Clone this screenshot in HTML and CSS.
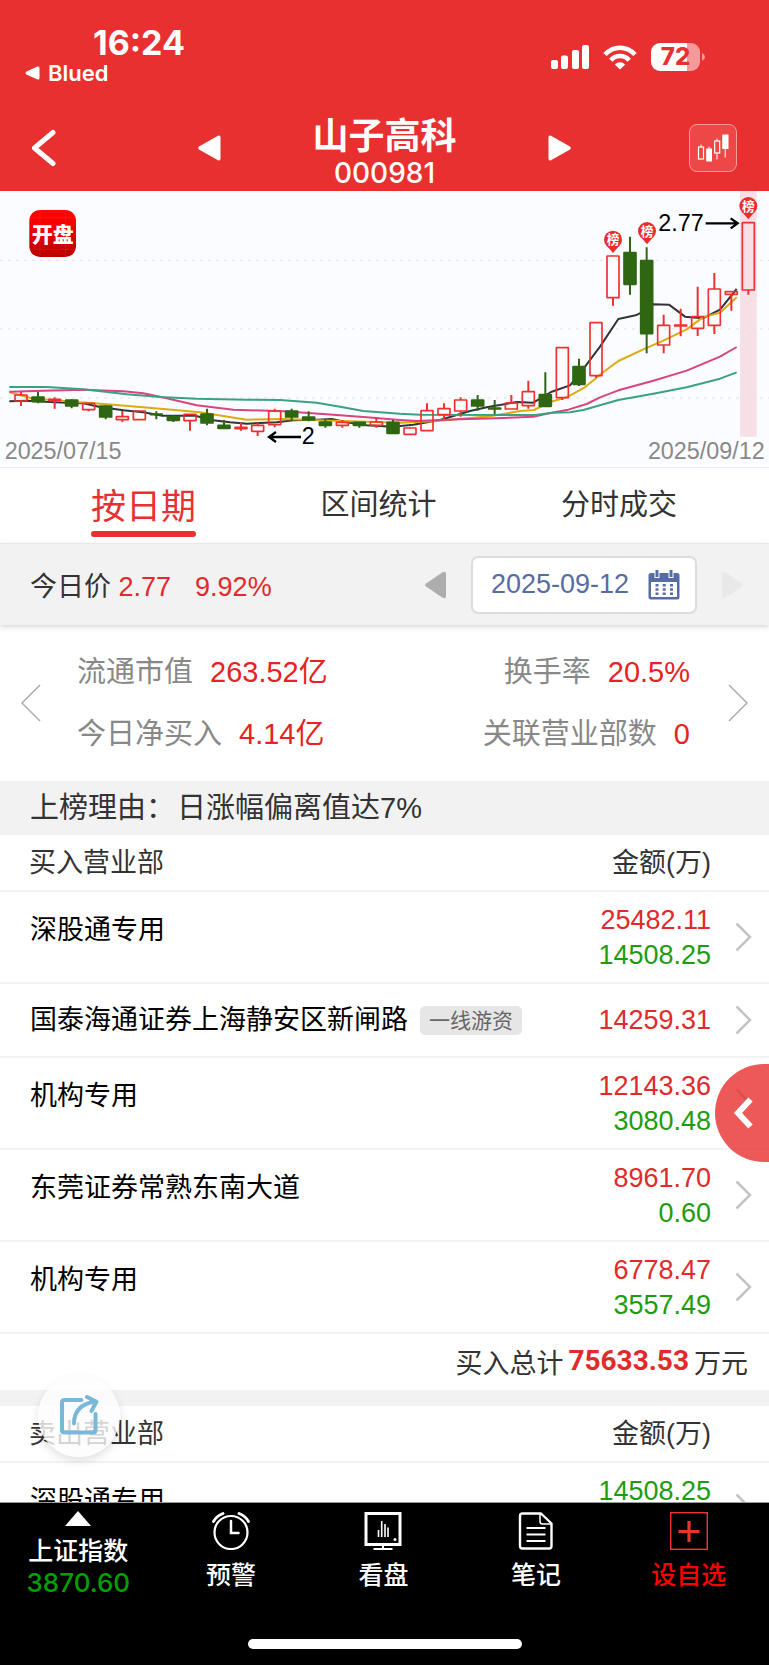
FILE: index.html
```html
<!DOCTYPE html>
<html lang="zh-CN">
<head>
<meta charset="utf-8">
<meta name="viewport" content="width=device-width, initial-scale=1">
<title>山子高科 000981</title>
<link rel="stylesheet" href="styles.css">
</head>
<body>
<header class="top">
  <div class="status">
    <div class="status-left">
      <div class="clock">16:24</div>
      <a class="return" href="#"><svg width="15" height="14" viewBox="0 0 15 14"><path d="M1.500 5.600 12.500.6Q14.500 0 14.500 2V12Q14.500 14 12.500 13.400L1.500 8.400Q-.5 7 1.500 5.600Z" fill="#fff"/></svg>Blued</a>
    </div>
    <div class="status-right">
      <svg width="38" height="25" viewBox="0 0 38 25" fill="#fff"><rect x="0" y="15" width="7" height="9" rx="2"/><rect x="10" y="10.500" width="7" height="13.500" rx="2"/><rect x="21" y="5" width="7" height="19" rx="2"/><rect x="31" y="0" width="7" height="24" rx="2"/></svg>
      <svg width="34" height="25" viewBox="0 0 34 25" fill="none" stroke="#fff" stroke-width="4.600"><path d="M2 9.500Q8.500 2.800 17 2.800T32 9.500"/><path d="M7.800 15.200Q11.500 11 17 11T26.200 15.200"/><path d="M17 24.500 11.800 19.400Q14 17.200 17 17.200T22.200 19.400Z" fill="#fff" stroke="none"/></svg>
      <div class="battery"><span>72</span></div>
      <svg class="nub" width="3" height="8" viewBox="0 0 3 8"><path d="M0 0Q3 1.500 3 4T0 8Z" fill="#f49a9a"/></svg>
    </div>
  </div>
  <nav class="titlebar">
    <button class="icon-btn back" aria-label="返回"><svg width="26" height="38" viewBox="0 0 26 38" fill="none" stroke="#fff" stroke-width="5" stroke-linecap="round" stroke-linejoin="round"><path d="M21 3.500 2.500 19 21 34.500"/></svg></button>
    <div class="switcher">
      <button class="icon-btn" aria-label="上一只"><svg width="23" height="26" viewBox="0 0 23 26"><path d="M1 11.500 20 .8Q22.500 0 22.500 2.500V23.500Q22.500 26 20 25.200L1 14.500Q-.5 13 1 11.500Z" fill="#fff"/></svg></button>
      <h1 class="name">山子高科<small>000981</small></h1>
      <button class="icon-btn" aria-label="下一只"><svg width="23" height="26" viewBox="0 0 23 26"><path d="M22 11.500 3 .8Q.5 0 .5 2.500V23.500Q.5 26 3 25.200L22 14.500Q23.500 13 22 11.500Z" fill="#fff"/></svg></button>
    </div>
    <button class="icon-btn kline" aria-label="K线"><svg width="32" height="28" viewBox="0 0 32 28" fill="none" stroke="#fff"><path d="M4 10.500V13M12 12.500V15M20 4.500V7M20 19V25.500M28.200 15V23.500"/><rect x="1.500" y="13" width="5" height="12" stroke-width="1.200"/><rect x="17.700" y="7" width="5" height="12" stroke-width="1.200"/><path d="M9.200 14.500H15V27.500H9.200ZM25.200.5H31.500V15H25.200Z" fill="#fff" stroke="none"/></svg></button>
  </nav>
</header>

<main>
  <section class="chart-box">
    <svg class="chart" id="chart" viewBox="0 3 2307 828">
      <rect x="2220" y="3" width="50" height="737" fill="#f6dfe5"/>
      <g stroke="#dfe1e4" stroke-width="3" stroke-dasharray="9 15"><path d="M0 211H2307M0 417H2307M0 624H2307"/></g>
      <g fill="none" stroke-width="6" stroke-linejoin="round">
        <path stroke="#333436" d="M28 634 80 632 150 636 200 638 250 640 300 651 370 661 430 667 487 677 585 677 640 691 690 697 740 701 830 697 880 691 950 689 995 687 1040 697 1100 706 1178 710 1240 704 1320 690 1410 663 1460 652 1550 636 1600 638 1653 606 1710 586 1740 550 1800 470 1855 387 1907 376 1930 365 1960 343 2007 344 2055 380 2108 385 2160 359 2210 297"/>
        <path stroke="#dcab10" d="M28 607 95 625 200 634 340 644 490 657 600 667 740 689 850 687 1000 692 1200 698 1300 694 1470 679 1560 663 1602 660 1650 636 1700 622 1753 593 1810 546 1855 513 1930 478 1990 452 2060 418 2108 382 2160 368 2210 322"/>
        <path stroke="#d84382" d="M28 605 130 602 250 599 370 604 430 610 500 625 590 646 700 659 850 664 1000 674 1100 682 1200 690 1250 693 1380 688 1490 685 1600 680 1650 669 1705 659 1760 642 1800 622 1855 601 1960 572 2060 542 2160 500 2210 471"/>
        <path stroke="#3aa283" d="M28 591 140 591 250 598 380 613 480 621 590 626 740 629 840 630 950 638 1020 650 1090 663 1200 671 1260 674 1605 675 1660 668 1710 667 1750 660 1855 630 1960 611 2060 592 2160 566 2210 547"/>
      </g>
      <g id="candles"></g>
      <g id="pins"></g>
      <g fill="none" stroke="#000" stroke-width="7"><path d="M2117 100H2212M2192 85 2213 100 2192 115M903 741H808M828 726 807 741 828 756"/></g>
      <g class="chart-value"><text x="1975" y="122">2.77</text><text x="905" y="763">2</text></g>
      <g class="chart-date"><text x="14" y="806">2025/07/15</text><text x="2294" y="806" text-anchor="end">2025/09/12</text></g>
      <defs><linearGradient id="lg" x1="0" y1="0" x2="0" y2="1"><stop offset="0" stop-color="#ff0500"/><stop offset=".35" stop-color="#f20000"/><stop offset="1" stop-color="#b80000"/></linearGradient></defs>
      <rect x="88" y="60" width="140" height="141" rx="32" fill="url(#lg)"/>
      <path d="M90 83H226M90 178H226M120 62V199M196 62V199" stroke="#fff" stroke-opacity=".12" stroke-width="2"/>
      <text class="chart-logo" x="158" y="155" text-anchor="middle">开盘</text>
    </svg>
  </section>

  <div class="tabs" role="tablist">
    <button class="tab active" role="tab" aria-selected="true">按日期</button>
    <button class="tab" role="tab" aria-selected="false">区间统计</button>
    <button class="tab" role="tab" aria-selected="false">分时成交</button>
  </div>

  <section class="daybar">
    <p class="today">今日价 <b>2.77</b><b class="pct">9.92%</b></p>
    <button class="icon-btn" aria-label="前一天"><svg width="22" height="28" viewBox="0 0 22 28"><path d="M1 12.500 18 1Q21 0 21 3V25Q21 28 18 27L1 15.500Q-.5 14 1 12.500Z" fill="#adadad"/></svg></button>
    <button class="date">2025-09-12<svg width="32" height="30" viewBox="0 0 32 30"><path d="M3 3H29Q31.500 3 31.500 5.500V27Q31.500 29.500 29 29.500H3Q.5 29.500 .5 27V5.500Q.5 3 3 3Z" fill="#576ca3"/><path d="M6.500 0H11.500V8H6.500ZM20.500 0H25.500V8H20.500Z" fill="#fff"/><path d="M7.500 0H10.500V7H7.500ZM21.500 0H24.500V7H21.500Z" fill="#576ca3"/><path d="M3 12H29V27H3Z" fill="#fff"/><path d="M9 14V25M16.200 14V25M23.500 14V25" stroke="#576ca3" stroke-width="3" stroke-dasharray="2.500 1.700"/></svg></button>
    <button class="icon-btn" aria-label="后一天" disabled><svg width="22" height="28" viewBox="0 0 22 28"><path d="M21 12.500 4 1Q1 0 1 3V25Q1 28 4 27L21 15.500Q22.500 14 21 12.500Z" fill="#e9e9e9"/></svg></button>
  </section>

  <section class="stats">
    <button class="icon-btn" aria-label="上一页"><svg width="20" height="38" viewBox="0 0 20 38" fill="none" stroke="#aaa" stroke-width="1.500"><path d="M19 1 1 19 19 37"/></svg></button>
    <dl class="stat-grid">
      <div><dt>流通市值</dt><dd>263.52亿</dd></div>
      <div><dt>换手率</dt><dd>20.5%</dd></div>
      <div><dt>今日净买入</dt><dd>4.14亿</dd></div>
      <div><dt>关联营业部数</dt><dd>0</dd></div>
    </dl>
    <button class="icon-btn" aria-label="下一页"><svg width="20" height="38" viewBox="0 0 20 38" fill="none" stroke="#aaa" stroke-width="1.500"><path d="M1 1 19 19 1 37"/></svg></button>
  </section>

  <p class="reason">上榜理由：<span>日涨幅偏离值达7%</span></p>

  <table class="seats">
    <thead><tr><th>买入营业部</th><th class="num">金额(万)</th><th class="go"></th></tr></thead>
    <tbody>
      <tr><td><a href="#">深股通专用</a></td><td class="num"><span class="buy">25482.11</span><span class="sell">14508.25</span></td><td class="go"><svg class="chev" viewBox="0 0 17 30"><path d="M1.500 1.500 15 15 1.500 28.500"/></svg></td></tr>
      <tr class="single"><td><a href="#">国泰海通证券上海静安区新闸路</a><span class="tag">一线游资</span></td><td class="num"><span class="buy">14259.31</span></td><td class="go"><svg class="chev" viewBox="0 0 17 30"><path d="M1.500 1.500 15 15 1.500 28.500"/></svg></td></tr>
      <tr><td><a href="#">机构专用</a></td><td class="num"><span class="buy">12143.36</span><span class="sell">3080.48</span></td><td class="go"><svg class="chev" viewBox="0 0 17 30"><path d="M1.500 1.500 15 15 1.500 28.500"/></svg></td></tr>
      <tr><td><a href="#">东莞证券常熟东南大道</a></td><td class="num"><span class="buy">8961.70</span><span class="sell">0.60</span></td><td class="go"><svg class="chev" viewBox="0 0 17 30"><path d="M1.500 1.500 15 15 1.500 28.500"/></svg></td></tr>
      <tr><td><a href="#">机构专用</a></td><td class="num"><span class="buy">6778.47</span><span class="sell">3557.49</span></td><td class="go"><svg class="chev" viewBox="0 0 17 30"><path d="M1.500 1.500 15 15 1.500 28.500"/></svg></td></tr>
    </tbody>
  </table>
  <p class="total">买入总计<strong>75633.53</strong>万元</p>

  <table class="seats">
    <thead><tr><th>卖出营业部</th><th class="num">金额(万)</th><th class="go"></th></tr></thead>
    <tbody>
      <tr><td><a href="#">深股通专用</a></td><td class="num top-line"><span class="sell">14508.25</span></td><td class="go"><svg class="chev" viewBox="0 0 17 30"><path d="M1.500 1.500 15 15 1.500 28.500"/></svg></td></tr>
    </tbody>
  </table>
</main>

<button class="drawer" aria-label="展开"><svg width="20" height="32" viewBox="0 0 20 32" fill="none" stroke="#fff" stroke-width="6"><path d="M17.500 2.500 5 16 17.500 29.500"/></svg></button>
<button class="share" aria-label="分享"><svg width="40" height="42" viewBox="0 0 40 42" fill="none" stroke="#7ab8d9" stroke-width="4" stroke-linecap="round" stroke-linejoin="round"><path d="M22.500 5H5.500Q3 5 3 7.500V35Q3 37.500 5.500 37.500H34Q36.500 37.500 36.500 35V19"/><path d="M15 28.500Q15 10 36 6.500M28 2 37.500 6.800 32.500 16"/></svg></button>

<nav class="bottom">
  <div class="items">
    <a class="item index" href="#"><svg width="26" height="15" viewBox="0 0 26 15"><path d="M13 0 26 15H0Z" fill="#fff"/></svg><span>上证指数</span><span class="index-value">3870.60</span></a>
    <a class="item" href="#"><svg width="38" height="38" viewBox="0 0 38 38" fill="none" stroke="#fff" stroke-width="2.200" stroke-linecap="round"><circle cx="19" cy="20.500" r="16.500"/><path d="M19 9V21H26.500" stroke-width="2.500"/><path d="M1.500 9.500Q4.500 4 11 1.500M36.500 9.500Q33.500 4 27 1.500" stroke-width="2.800"/></svg><span>预警</span></a>
    <a class="item" href="#"><svg width="38" height="38" viewBox="0 0 38 38" fill="none" stroke="#fff"><rect x="2" y="1.500" width="34" height="31" stroke-width="3"/><path d="M19 33V37M9.500 37H28.500" stroke-width="2"/><path d="M14.500 25V18M17.700 25V9M21 25V12M24 25V15.500" stroke-width="1.600"/><circle cx="31" cy="27.500" r="1.500" fill="#fff" stroke="none"/></svg><span>看盘</span></a>
    <a class="item" href="#"><svg width="38" height="38" viewBox="0 0 38 38" fill="none" stroke="#fff" stroke-width="2.400" stroke-linejoin="round"><path d="M24 1.500H5.500Q3 1.500 3 4V34Q3 36.500 5.500 36.500H32Q34.500 36.500 34.500 34V11.500Z"/><path d="M23 2V9.500Q23 12 25.500 12H34" stroke-width="1.500"/><path d="M9.500 16H28.500M9.500 22.500H28.500M9.500 29H28.500" stroke-width="2"/></svg><span>笔记</span></a>
    <a class="item add" href="#"><svg width="38" height="38" viewBox="0 0 38 38" fill="none" stroke="#ee3131"><rect x=".7" y=".7" width="36.600" height="36.600" stroke-width="1.500"/><path d="M19 9V30M8.500 19.500H29.500" stroke-width="3.200"/></svg><span>设自选</span></a>
  </div>
  <div class="home"></div>
</nav>
<script src="chart.js"></script>
</body>
</html>
```
FILE: styles.css
```css
* { box-sizing: border-box; margin: 0; padding: 0; }
body {
  font-family: "Liberation Sans", "Noto Sans CJK SC", sans-serif;
  font-size: 27px;
  color: #333;
  background: #fff;
}
a { color: inherit; text-decoration: none; }
svg { display: block; flex: none; }
button { font: inherit; color: inherit; background: none; border: 0; }
.icon-btn { display: flex; align-items: center; justify-content: center; }

.top { background: #e93030; color: #fff; padding: 22px 32px 0; }
.status { display: flex; justify-content: space-between; height: 78px; padding-right: 32px; }
.status-left { margin-left: -7px; }
.clock { font: 700 34px/41px Inter, sans-serif; padding-left: 68px; }
.return { display: flex; align-items: center; gap: 8px; font: 600 22px/20px Inter, sans-serif; }
.status-right { display: flex; align-items: center; height: 70px; }
.status-right svg + svg { margin-left: 14px; }
.battery {
  width: 49px; height: 28px; margin-left: 14px; border-radius: 9px;
  background: linear-gradient(90deg, #fff 73%, #f49a9a 73%);
  color: #e93030; font: 800 24px/28px Inter, sans-serif; text-align: center;
}
.nub { margin-left: 2px; }

.titlebar { display: grid; grid-template-columns: 48px 1fr 48px; align-items: center; justify-items: center; height: 91px; padding-top: 4px; }
.back { justify-self: start; }
.switcher { display: flex; align-items: center; justify-content: space-between; width: 374px; }
.name { display: flex; flex-direction: column; align-items: center; padding-top: 13px; font-size: 36px; line-height: 38px; font-weight: 700; }
.name small { font: 500 28px/34px Inter, sans-serif; }
.kline { width: 48px; height: 48px; border: 1px solid #f59a9a; border-radius: 8px; background: #ed4747; }

.chart-box { background: #fbfcff; border-bottom: 1px solid #eceef1; }
.chart { width: 100%; height: auto; }
.chart-value { font-size: 70px; fill: #000; }
.chart-date { font-size: 70px; fill: #888; }
.chart-logo { font: 900 63px "Noto Sans CJK SC", sans-serif; fill: #fff; }
.pin-text { font: 700 38px "Noto Sans CJK SC", sans-serif; fill: #fff; }

.tabs { display: flex; justify-content: space-between; height: 75px; padding: 0 92px 0 91px; }
.tab { align-self: flex-start; padding-top: 19px; font-size: 29px; line-height: 36px; }
.tab.active { position: relative; padding-bottom: 18px; font-size: 35px; line-height: 40px; color: #e93030; }
.tab.active::after { content: ""; position: absolute; left: 0; right: 0; bottom: 8px; height: 6px; border-radius: 3px; background: #e93030; }

.daybar {
  display: flex; align-items: center; height: 82px; padding: 0 26px 0 30px;
  background: #f2f2f2; border-top: 1px solid #e9e9e9; box-shadow: 0 2px 5px rgba(0, 0, 0, .16);
}
.today { flex: 1; }
.today b { font-weight: 400; color: #e12a2a; }
.today .pct { margin-left: 24px; }
.date {
  display: flex; align-items: center; justify-content: space-between; width: 226px; height: 58px;
  margin: 0 24px; padding: 0 15px 0 18px; border: 2px solid #dcdcdc; border-radius: 7px;
  background: #fff; color: #576ca3;
}

.stats { display: flex; align-items: center; height: 156px; padding: 0 21px; }
.stat-grid { flex: 1; display: grid; grid-template-columns: auto auto; padding: 0 38px 0 36px; row-gap: 26px; font-size: 29px; line-height: 36px; }
.stat-grid div { display: flex; gap: 17px; }
.stat-grid div:nth-child(even) { justify-content: flex-end; }
.stat-grid dt { color: #888; }
.stat-grid dd { color: #e62222; }

.reason { background: #f2f2f2; padding: 0 30px; font-size: 29px; line-height: 54px; }
.reason span { margin-left: 2px; }

.seats { width: 100%; border-collapse: collapse; line-height: 35px; }
.seats tr { border-bottom: 2px solid #f2f2f2; }
.seats th { height: 56px; font-weight: 400; text-align: left; padding: 2px 0 0 29px; }
.seats td { height: 92px; padding: 0 0 14px 30px; color: #000; }
.seats .num { text-align: right; padding: 1px 0 0; }
.seats .go { width: 58px; padding: 0; }
.seats .single td { height: 74px; padding-bottom: 0; }
.seats td span { display: block; }
.seats td.top-line { vertical-align: top; padding-top: 11px; }
.seats .buy { color: #e12a2a; }
.seats .sell { color: #1d9c10; }
.seats td .tag { display: inline-block; margin-left: 12px; padding: 0 9px; border-radius: 5px; background: #e6e6e6; color: #666; font-size: 21px; line-height: 29px; vertical-align: 1px; }
.chev { width: 17px; height: 30px; margin-left: 24px; fill: none; stroke: #c4c4c4; stroke-width: 2.5; }

.total { display: flex; justify-content: flex-end; align-items: center; gap: 5px; height: 72px; padding: 0 21px 2px 0; border-bottom: 16px solid #f2f2f2; }
.total strong { font: 700 28px/36px Roboto, sans-serif; color: #e12a2a; }

.drawer {
  position: fixed; right: 0; bottom: 503px; width: 54px; height: 98px; padding-left: 18px;
  border-radius: 49px 0 0 49px; background: rgba(233, 48, 48, .8);
}
.share {
  position: fixed; left: 38px; bottom: 208px; width: 82px; height: 82px; border-radius: 50%;
  display: flex; align-items: center; justify-content: center;
  background: rgba(252, 252, 252, .8); box-shadow: 0 4px 10px rgba(0, 0, 0, .12);
}

.bottom { position: fixed; left: 0; right: 0; bottom: 0; height: 163px; background: #000; border-top: 1px solid #999; color: #fff; }
.items { display: grid; grid-template-columns: repeat(5, 1fr); height: 136px; padding: 0 4px 0 2px; }
.item { display: flex; flex-direction: column; align-items: center; gap: 7px; padding-top: 9px; font-size: 25px; line-height: 36px; font-weight: 500; }
.item.index { gap: 0; padding-top: 8px; }
.item.index svg { margin-bottom: 7px; }
.item.index .index-value { font: 500 26px/28px Inter, sans-serif; color: #00a000; }
.add { color: #f00; }
.home { width: 274px; height: 10px; margin: 0 auto; border-radius: 5px; background: #fff; }
```
FILE: chart.js
```js
// Each candle: [direction, high, body top, body bottom, low]
const candles = [
  ["r",605,615,633,648],["g",605,621,635,640],["r",622,628,632,656],["g",628,630,648,655],
  ["r",638,640,659,664],["g",646,648,681,688],["r",663,680,689,696],["r",662,663,689,690],
  ["g",664,672,674,688],["g",676,680,691,696],["r",672,673,692,722],["g",656,672,699,706],
  ["g",690,706,715,716],["r",698,712,716,722],["r",698,706,724,738],["r",656,663,704,712],
  ["g",656,663,681,692],["g",664,681,690,694],["g",688,696,706,713],["r",690,697,706,713],
  ["g",696,697,706,713],["r",682,696,706,713],["g",690,697,730,732],["r",712,714,733,734],
  ["r",640,662,722,722],["r",640,656,674,688],["r",622,630,663,680],["g",615,630,648,662],
  ["g",630,654,657,672],["r",615,639,657,657],["r",572,605,647,656],["g",547,614,649,650],
  ["r",472,473,623,630],["g",506,530,583,588],["r",398,398,557,563],["r",197,198,323,347],
  ["g",140,188,283,314],["g",172,212,431,490],["r",374,406,465,490],["r",356,405,408,439],
  ["r",290,380,415,438],["r",249,297,406,432],["r",304,305,313,362],["r",97,98,300,314]
];
const first = 63, step = 50.74;
const colors = { r: "#ee3030", g: "#2f6612" };
document.getElementById("candles").innerHTML = candles.map(([d, high, top, bottom, low], i) => {
  const x = Math.round(first + i * step), c = colors[d];
  return `<path d="M${x} ${high}V${top}M${x} ${bottom}V${low}" stroke="${c}" stroke-width="6"/>` +
    `<rect x="${x - 18}" y="${top}" width="36" height="${bottom - top}" rx="1" stroke="${c}" stroke-width="5" fill="${d === "g" ? c : "none"}"/>`;
}).join("");

// Markers for the days on the ranking list
document.getElementById("pins").innerHTML = [[1839, 149], [1941, 123], [2245, 48]].map(([x, y]) =>
  `<path d="M${x - 18} ${y + 19}L${x} ${y + 40}L${x + 18} ${y + 19}Z" fill="#e92d2d"/>` +
  `<circle cx="${x}" cy="${y}" r="27" fill="#e92d2d"/>` +
  `<text class="pin-text" x="${x}" y="${y + 14}" text-anchor="middle">榜</text>`
).join("");
```
